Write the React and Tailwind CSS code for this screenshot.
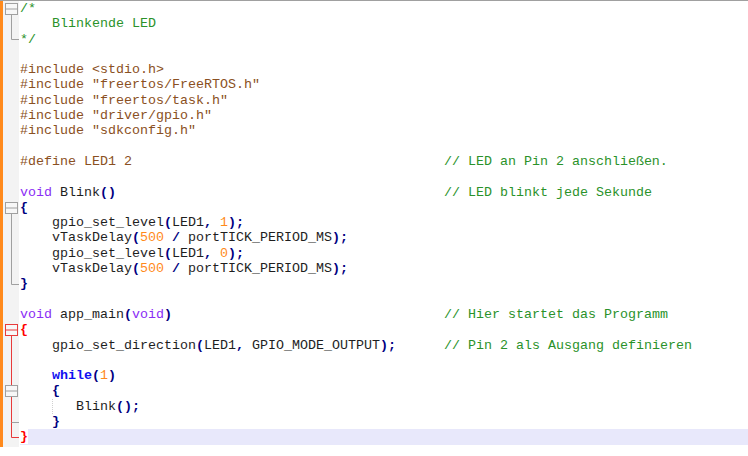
import React from 'react';

const LH = 15.3;
const COMMENT_COL = 53;

const styles = {
  c: 'text-[#2a922a]',
  p: 'text-[#8a5022]',
  k: 'text-[#8a2ef5]',
  w: 'text-[#1010f0] font-bold',
  o: 'text-[#000080] font-bold',
  n: 'text-[#ff8a1a]',
  d: 'text-[#1e1e1e]',
  r: 'text-[#ff0000] font-bold bg-white',
};

const lines = [
  [['c', '/*']],
  [['c', '    Blinkende LED']],
  [['c', '*/']],
  [],
  [['p', '#include <stdio.h>']],
  [['p', '#include "freertos/FreeRTOS.h"']],
  [['p', '#include "freertos/task.h"']],
  [['p', '#include "driver/gpio.h"']],
  [['p', '#include "sdkconfig.h"']],
  [],
  { code: [['p', '#define LED1 2']], note: '// LED an Pin 2 anschließen.' },
  [],
  { code: [['k', 'void'], ['d', ' Blink'], ['o', '()']], note: '// LED blinkt jede Sekunde' },
  [['o', '{']],
  [['d', '    gpio_set_level'], ['o', '('], ['d', 'LED1'], ['o', ','], ['d', ' '], ['n', '1'], ['o', ');']],
  [['d', '    vTaskDelay'], ['o', '('], ['n', '500'], ['d', ' '], ['o', '/'], ['d', ' portTICK_PERIOD_MS'], ['o', ');']],
  [['d', '    gpio_set_level'], ['o', '('], ['d', 'LED1'], ['o', ','], ['d', ' '], ['n', '0'], ['o', ');']],
  [['d', '    vTaskDelay'], ['o', '('], ['n', '500'], ['d', ' '], ['o', '/'], ['d', ' portTICK_PERIOD_MS'], ['o', ');']],
  [['o', '}']],
  [],
  {
    code: [['k', 'void'], ['d', ' app_main'], ['o', '('], ['k', 'void'], ['o', ')']],
    note: '// Hier startet das Programm',
  },
  [['r', '{']],
  {
    code: [['d', '    gpio_set_direction'], ['o', '('], ['d', 'LED1'], ['o', ','], ['d', ' GPIO_MODE_OUTPUT'], ['o', ');']],
    note: '// Pin 2 als Ausgang definieren',
  },
  [],
  [['d', '    '], ['w', 'while'], ['o', '('], ['n', '1'], ['o', ')']],
  [['d', '    '], ['o', '{']],
  [['d', '       Blink'], ['o', '();']],
  [['d', '    '], ['o', '}']],
  [['r', '}']],
];

function FoldMargin() {
  const mid = (i) => i * LH + LH / 2;
  const gray = '#a0a0a0';
  const red = '#e83a3a';

  const box = (i, color) => {
    const c = Math.round(mid(i)) + 0.5;
    return (
      <g key={'b' + i}>
        <rect x="2.5" y={c - 6} width="12" height="11" fill="#f7f7f7" stroke={color} />
        <line x1="2.5" y1={c - 0.5} x2="14.5" y2={c - 0.5} stroke={color} />
      </g>
    );
  };

  const vline = (from, to, color) => (
    <line key={'v' + from + color} x1="8.5" y1={Math.round(mid(from)) + 5} x2="8.5" y2={Math.round(mid(to)) + 0.5} stroke={color} />
  );

  const tail = (i, color) => (
    <line key={'t' + i + color} x1="8.5" y1={Math.round(mid(i)) + 0.5} x2="16" y2={Math.round(mid(i)) + 0.5} stroke={color} />
  );

  return (
    <svg width="16" height={29 * LH} className="block">
      {vline(0, 2, gray)}
      {tail(2, gray)}
      {box(0, gray)}

      {vline(13, 18, gray)}
      {tail(18, gray)}
      {box(13, gray)}

      {vline(21, 28, red)}
      {tail(28, red)}
      {box(21, red)}
      {box(25, gray)}
      {tail(27, gray)}
    </svg>
  );
}

function CodeLine({ line, index }) {
  const isCurrent = index === 28;
  let tokens = Array.isArray(line) ? line : line.code;
  if (!Array.isArray(line)) {
    const len = tokens.reduce((n, t) => n + t[1].length, 0);
    tokens = [...tokens, ['d', ' '.repeat(COMMENT_COL - len)], ['c', line.note]];
  }

  return (
    <div className={`h-[15.3px] whitespace-pre ${isCurrent ? 'bg-[#e8e8fb]' : ''}`}>
      {tokens.map((t, i) => (
        <span key={i} className={styles[t[0]]}>
          {t[1]}
        </span>
      ))}
    </div>
  );
}

export default function App() {
  return (
    <div className="w-[748px] h-[456px] bg-white overflow-hidden border-t border-[#a0a0a0]">
      <div className="flex h-[446px]">
        {/* change-history bar */}
        <div className="w-[3px] bg-[#ff8a1c]" />

        {/* fold margin */}
        <div className="w-[16px] bg-[#f3f3f3]">
          <FoldMargin />
        </div>

        {/* text area */}
        <div
          className="relative flex-1 pl-[1px] text-[13.333px] leading-[15.3px]"
          style={{ fontFamily: '"Liberation Mono", "Courier New", monospace' }}
        >
          {lines.map((line, i) => (
            <CodeLine key={i} line={line} index={i} />
          ))}
          {/* indent guide in while block */}
          <div className="absolute left-[33px] top-[398px] h-[15px] border-l border-dotted border-[#d0d0d0]" />
        </div>
      </div>
    </div>
  );
}
